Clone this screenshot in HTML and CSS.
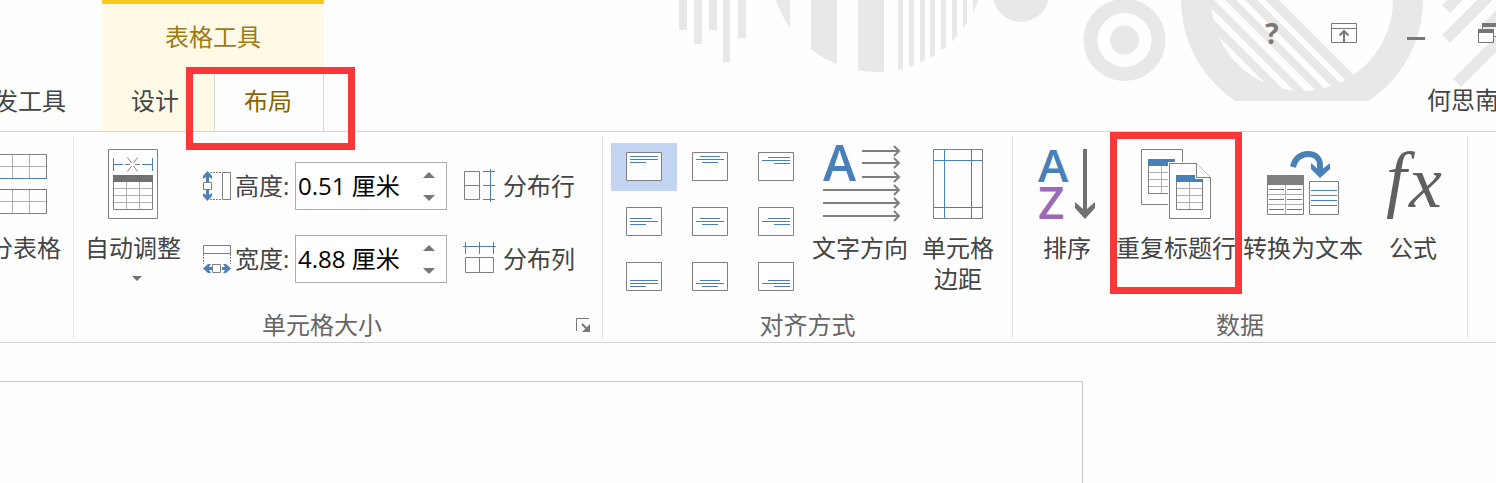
FILE: index.html
```html
<!DOCTYPE html>
<html lang="zh-CN">
<head>
  <meta charset="UTF-8">
  <title>表格工具 - 布局</title>
  <meta name="viewport" content="width=device-width, initial-scale=1.0">
  <link rel="stylesheet" href="styles.css">
</head>
<body>
  <header class="titlebar">
    <svg class="decoration" width="836" height="131" viewBox="0 0 836 131" aria-hidden="true">
      <defs>
        <clipPath id="disc"><circle cx="217" cy="-35" r="107"/></clipPath>
        <clipPath id="ring"><rect x="510" y="0" width="260" height="101"/></clipPath>
        <clipPath id="hole"><circle cx="642" cy="0" r="92"/></clipPath>
      </defs>
      <g fill="#e8e8e8">
        <path d="M19 0h8v30h-8zM34 0h8v44h-8zM49 0h8v30h-8zM63 0h7v62h-7zM78 0h8v38h-8z"/>
        <path clip-path="url(#disc)" d="M100 0h30v80h-30zM151 0h26v80h-26zM198 0h26v80h-26zM238 0h5v80h-5zM249 0h5v80h-5zM260 0h5v80h-5zM270 0h5v80h-5zM281 0h5v80h-5zM292 0h5v80h-5zM303 0h4v80h-4zM313 0h5v80h-5z"/>
        <circle cx="361" cy="-6" r="28"/>
      </g>
      <circle cx="464.500" cy="40" r="34" fill="none" stroke="#e8e8e8" stroke-width="14"/>
      <circle cx="464.500" cy="40" r="14.500" fill="#e8e8e8"/>
      <circle cx="642" cy="0" r="106" fill="none" stroke="#e8e8e8" stroke-width="30" clip-path="url(#ring)"/>
      <path clip-path="url(#hole)" fill="#e8e8e8" d="M522 0h12l100 100h-12zM543 0h11l100 100h-11zM565 0h11l100 100h-11zM585 0h12l100 100h-12zM605 0h14l100 100h-14z"/>
      <path stroke="#e8e8e8" stroke-width="11" d="M786 9l14-14M786 39l44-44M797 83l43-43M825 29l15-15"/>
    </svg>

    <nav class="main-tabs">
      <button class="tab">开发工具</button>
    </nav>
    <div class="context-group">
      <div class="context-title">表格工具</div>
      <nav class="context-tabs">
        <button class="tab">设计</button>
        <button class="tab active">布局</button>
        <span class="mark mark-tab"></span>
      </nav>
    </div>
    <div class="window-side">
      <div class="window-controls">
        <button class="help" aria-label="帮助">?</button>
        <button aria-label="功能区显示选项">
          <svg width="26" height="20" viewBox="0 0 26 20" fill="none" stroke="#777">
            <path d="M.5.5h25v19H.5zM0 5.500h26"/>
            <path stroke-width="2" d="M13 19V8M8.500 12.500L13 8l4.500 4.500"/>
          </svg>
        </button>
        <button aria-label="最小化">
          <svg width="26" height="20" viewBox="0 0 26 20"><path fill="#777" d="M4 14h18v3H4z"/></svg>
        </button>
        <button aria-label="还原">
          <svg width="20" height="20" viewBox="0 0 20 20" fill="none" stroke="#777">
            <path d="M4.500 6V.5h15v13H16"/>
            <path stroke-width="4" d="M4 2h16M0 8h16"/>
            <path d="M.5 8v11.500h15V8"/>
          </svg>
        </button>
      </div>
      <a class="user" href="#">何思南</a>
    </div>
  </header>

  <main class="ribbon">
    <section class="group group-merge">
      <div class="group-body">
        <button class="big">
          <svg width="68" height="80" viewBox="0 0 68 80" fill="none">
            <path stroke="#b0b0b0" d="M16.500 11v24M33.500 11v24M50.500 11v24M0 23.500h68M16.500 47v24M33.500 47v24M50.500 47v24M0 58.500h68"/>
            <path stroke="#7f7f7f" d="M.5 35V11.500h67V35M.5 46v24.500h67V46"/>
            <path stroke="#4a80b8" d="M0 35.500h68M0 46.500h68"/>
          </svg>
          拆分表格
        </button>
      </div>
    </section>

    <section class="group group-size">
      <div class="group-body">
        <button class="big w-102">
          <svg width="50" height="80" viewBox="0 0 50 80" fill="none">
            <path stroke="#7f7f7f" fill="#fff" d="M.5 6.500h49v69H.5z"/>
            <path stroke="#4a80b8" d="M5.500 15v13M5.500 21.500H15M34 21.500h10.500M44.500 15v13"/>
            <path stroke="#7f7f7f" d="M17 21.500h5M27 21.500h5M19.500 14.500l4 5.500M29.500 14.500l-4 5.500M19.500 28.500l4-5.500M29.500 28.500l-4-5.500"/>
            <path fill="#717171" d="M5 32h40v7H5z"/>
            <path stroke="#b0b0b0" d="M18.500 39v27M31.500 39v27M5 45.500h40M5 52.500h40M5 59.500h40"/>
            <path stroke="#7f7f7f" d="M5.500 39v27.500h39V39"/>
          </svg>
          自动调整
          <svg class="drop" width="18" height="5" viewBox="0 0 18 5"><path fill="#717171" d="M8 0h10l-5 5z"/></svg>
        </button>

        <div class="fields">
          <div class="field">
            <svg width="28" height="30" viewBox="0 0 28 30" fill="none">
              <path fill="#4a80b8" d="M4.500 0L9 5v3L6 6v5H3V6L0 8V5zM4.500 30L9 25v-3l-3 2v-5H3v5l-3-2v3z"/>
              <path fill="#fff" stroke="#7f7f7f" d="M.5 11.500h8v7h-8zM19.500 1.500h8v27h-8z"/>
              <path stroke="#7f7f7f" stroke-dasharray="2 1" d="M7 1.500h12M7 28.500h12"/>
            </svg>
            <label for="cell-height">高度:</label>
            <div class="spin">
              <input type="text" id="cell-height" value="0.51 厘米">
              <div class="arrows">
                <button aria-label="增加高度"><svg width="12" height="6" viewBox="0 0 12 6"><path fill="#777" d="M0 6h12L6 0z"/></svg></button>
                <button aria-label="减少高度"><svg width="12" height="6" viewBox="0 0 12 6"><path fill="#777" d="M0 0h12L6 6z"/></svg></button>
              </div>
            </div>
          </div>
          <div class="field">
            <svg width="28" height="30" viewBox="0 0 28 30" fill="none">
              <path stroke="#7f7f7f" d="M.5 1.500h27v8H.5zM9.500 20.500h8v8h-8z"/>
              <path stroke="#7f7f7f" stroke-dasharray="2 1" d="M.5 10v10M27.500 10v10"/>
              <path fill="#4a80b8" d="M0 24.500L5 20h3l-2 3h3v3H6l2 3H5zM28 24.500L23 20h-3l2 3h-3v3h3l-2 3h3z"/>
            </svg>
            <label for="cell-width">宽度:</label>
            <div class="spin">
              <input type="text" id="cell-width" value="4.88 厘米">
              <div class="arrows">
                <button aria-label="增加宽度"><svg width="12" height="6" viewBox="0 0 12 6"><path fill="#777" d="M0 6h12L6 0z"/></svg></button>
                <button aria-label="减少宽度"><svg width="12" height="6" viewBox="0 0 12 6"><path fill="#777" d="M0 0h12L6 6z"/></svg></button>
              </div>
            </div>
          </div>
        </div>

        <div class="spread">
          <button class="small">
            <svg width="34" height="34" viewBox="0 0 34 34" fill="none">
              <path stroke="#7f7f7f" d="M1.500 2.500h15v28h-15zM1 16.500h15"/>
              <path stroke="#4a80b8" d="M27.500 0v33M20 2.500h12M20 16.500h12M20 30.500h12"/>
            </svg>
            <span>分布行</span>
          </button>
          <button class="small">
            <svg width="34" height="34" viewBox="0 0 34 34" fill="none">
              <path stroke="#7f7f7f" d="M2.500 15.500h28v15h-28zM16.500 15v15"/>
              <path stroke="#4a80b8" d="M0 4.500h33M2.500 0v12M16.500 0v12M30.500 0v12"/>
            </svg>
            <span>分布列</span>
          </button>
        </div>
      </div>
      <div class="caption">
        <span>单元格大小</span>
        <button class="launcher" aria-label="单元格大小设置">
          <svg width="14" height="14" viewBox="0 0 14 14" fill="none" stroke="#777">
            <path d="M.5 13V.5H13"/>
            <path stroke-width="2" d="M6 6l5 5"/>
            <path fill="#777" stroke="none" d="M14 6v8H6z"/>
          </svg>
        </button>
      </div>
    </section>

    <section class="group group-align">
      <div class="group-body">
        <div class="align-grid">
          <button class="active" aria-label="靠上左对齐"><svg width="36" height="29" viewBox="0 0 36 29"><path class="cell" d="M.5.5h35v28H.5z"/><path class="lines" d="M4 4.500h28M4 7.500h28M4 10.500h16"/></svg></button>
          <button aria-label="靠上居中"><svg width="36" height="29" viewBox="0 0 36 29"><path class="cell" d="M.5.5h35v28H.5z"/><path class="lines" d="M8 4.500h20M4 7.500h28M10 10.500h16"/></svg></button>
          <button aria-label="靠上右对齐"><svg width="36" height="29" viewBox="0 0 36 29"><path class="cell" d="M.5.5h35v28H.5z"/><path class="lines" d="M10 5.500h22M4 8.500h28M16 11.500h16"/></svg></button>
          <button aria-label="中部左对齐"><svg width="36" height="29" viewBox="0 0 36 29"><path class="cell" d="M.5.5h35v28H.5z"/><path class="lines" d="M4 11.500h22M4 14.500h28M4 17.500h16"/></svg></button>
          <button aria-label="水平居中"><svg width="36" height="29" viewBox="0 0 36 29"><path class="cell" d="M.5.5h35v28H.5z"/><path class="lines" d="M8 11.500h20M4 14.500h28M10 17.500h16"/></svg></button>
          <button aria-label="中部右对齐"><svg width="36" height="29" viewBox="0 0 36 29"><path class="cell" d="M.5.5h35v28H.5z"/><path class="lines" d="M10 11.500h22M4 14.500h28M16 17.500h16"/></svg></button>
          <button aria-label="靠下左对齐"><svg width="36" height="29" viewBox="0 0 36 29"><path class="cell" d="M.5.5h35v28H.5z"/><path class="lines" d="M4 18.500h28M4 21.500h28M4 24.500h16"/></svg></button>
          <button aria-label="靠下居中"><svg width="36" height="29" viewBox="0 0 36 29"><path class="cell" d="M.5.5h35v28H.5z"/><path class="lines" d="M8 18.500h20M4 21.500h28M10 24.500h16"/></svg></button>
          <button aria-label="靠下右对齐"><svg width="36" height="29" viewBox="0 0 36 29"><path class="cell" d="M.5.5h35v28H.5z"/><path class="lines" d="M10 18.500h22M4 21.500h28M16 24.500h16"/></svg></button>
        </div>
        <button class="big w-102">
          <svg width="82" height="80" viewBox="-4 0 82 80" fill="none">
            <text class="letter" x="0" y="38" font-size="50" fill="#4a80b8">A</text>
            <path stroke="#7f7f7f" stroke-width="2" d="M39 8h37M39 20h37M39 34h37M0 47h76M0 60h76M0 73h76"/>
            <path stroke="#7f7f7f" stroke-width="2" d="M71 3l5 5-5 5M71 15l5 5-5 5M71 29l5 5-5 5M71 42l5 5-5 5M71 55l5 5-5 5M71 68l5 5-5 5"/>
          </svg>
          文字方向
        </button>
        <button class="big w-94">
          <svg width="50" height="80" viewBox="0 0 50 80" fill="none">
            <path stroke="#4a80b8" d="M11.500 6v70M38.500 6v70M0 17.500h50M0 64.500h50"/>
            <path stroke="#7f7f7f" d="M.5 6.500h49v69H.5z"/>
          </svg>
          单元格<br>边距
        </button>
      </div>
      <div class="caption"><span>对齐方式</span></div>
    </section>

    <section class="group group-data">
      <div class="group-body">
        <button class="big w-92">
          <svg width="58" height="80" viewBox="0 0 58 80">
            <text class="letter" x="0" y="39" font-size="46" fill="#4a80b8">A</text>
            <text class="letter" x="0" y="76" font-size="46" fill="#9a6ab8">Z</text>
            <path fill="#717171" d="M45 6h4v60l8-7v6L47 76 37 65v-6l8 7z"/>
          </svg>
          排序
        </button>
        <button class="big w-126">
          <svg width="70" height="80" viewBox="0 0 70 80" fill="none">
            <path fill="#fff" stroke="#7f7f7f" d="M.5 6.500h41v55H.5z"/>
            <path stroke="#b0b0b0" d="M20.500 23v27M8 29.500h26M8 36.500h26M8 43.500h26"/>
            <path stroke="#7f7f7f" d="M7.500 23v27.500H34"/>
            <path fill="#4a80b8" d="M7 16h27v7H7z"/>
            <path fill="#fff" d="M27 19h30l13 13v44H27z"/>
            <path fill="#fff" stroke="#7f7f7f" d="M28.500 20.500h27l14 14v41h-41z"/>
            <path stroke="#b0b0b0" d="M48.500 39v27M35 45.500h26M35 52.500h26M35 59.500h26"/>
            <path stroke="#7f7f7f" d="M35.500 39v27.500h26V39"/>
            <path fill="#4a80b8" d="M35 32h19v4h8v3H35z"/>
            <path fill="#fff" stroke="#7f7f7f" d="M55.500 20.500v14h14"/>
          </svg>
          重复标题行
          <span class="mark mark-repeat"></span>
        </button>
        <button class="big w-128">
          <svg width="72" height="80" viewBox="0 0 72 80" fill="none">
            <path stroke="#b0b0b0" d="M18.500 42v30M0 51.500h37M0 61.500h37"/>
            <path stroke="#7f7f7f" d="M.5 42v29.500h36V42M42.500 38.500h29v33h-29z"/>
            <path fill="#7f7f7f" d="M0 32h37v10H0z"/>
            <path stroke="#4a80b8" d="M2 46.500h15M20 46.500h15M2 56.500h15M20 56.500h15M2 66.500h15M20 66.500h15M44 47.500h26M44 52.500h26M44 57.500h26M44 62.500h26"/>
            <path stroke="#4a80b8" stroke-width="6" d="M26 24C28 15 34 11 41 11c8 0 12 5 12 11v6"/>
            <path fill="#4a80b8" d="M44 20l9 8 10-8v6L53 35l-9-9z"/>
          </svg>
          转换为文本
        </button>
        <button class="big w-92">
          <svg width="60" height="80" viewBox="0 0 60 80"><text class="formula" x="3" y="60" font-size="74">f<tspan x="26" y="64">x</tspan></text></svg>
          公式
        </button>
      </div>
      <div class="caption"><span>数据</span></div>
    </section>
  </main>

  <div class="workspace">
    <div class="page"></div>
  </div>
</body>
</html>
```

FILE: styles.css
```css
* {
  box-sizing: border-box;
}
body {
  margin: 0;
  min-height: 100vh;
  display: flex;
  flex-direction: column;
  overflow: hidden;
  background: #fdfdfd;
  color: #444;
  font-family: "Open Sans", "Noto Sans CJK SC", sans-serif;
  font-size: 24px;
  line-height: 31px;
}
button {
  margin: 0;
  padding: 0;
  border: none;
  background: none;
  color: inherit;
  font: inherit;
  white-space: nowrap;
  cursor: pointer;
}
svg {
  display: block;
  flex-shrink: 0;
}

/* title bar */
.titlebar {
  position: relative;
  display: flex;
  border-bottom: 1px solid #d4d4d4;
  background: #fefefe;
}
.decoration {
  position: absolute;
  top: 0;
  right: 0;
}
.main-tabs {
  width: 102px;
  padding-right: 36px;
  display: flex;
  justify-content: flex-end;
  align-items: flex-end;
}
.tab {
  height: 58px;
  padding-bottom: 3px;
  flex-shrink: 0;
}
.context-group {
  width: 222px;
  border-top: 4px solid #f5cc1b;
  background: #fffae6;
}
.context-title {
  padding: 17px 0 21px;
  color: #9c7a16;
  text-align: center;
}
.context-tabs {
  position: relative;
  display: flex;
}
.context-tabs .tab {
  width: 112px;
  padding-right: 4px;
}
.context-tabs .tab.active {
  width: 110px;
  margin-bottom: -1px;
  padding-right: 2px;
  border: 1px solid #d4d4d4;
  border-width: 0 1px;
  background: #fefefe;
  color: #866400;
}
.context-tabs .tab:first-child {
  padding-right: 6px;
}
.window-side {
  position: relative;
  width: 260px;
  margin-left: auto;
}
.window-controls {
  display: flex;
}
.window-controls button {
  width: 72px;
  height: 66px;
  flex-shrink: 0;
  display: flex;
  align-items: center;
  justify-content: center;
}
.window-controls .help {
  color: #777;
  font-size: 28px;
  font-weight: bold;
}
.user {
  display: block;
  padding: 18px 0 0 191px;
  color: #444;
  text-decoration: none;
  white-space: nowrap;
}

/* red marks */
.mark {
  position: absolute;
  z-index: 1;
  border: 7px solid #fc3737;
  pointer-events: none;
}
.mark-tab {
  top: -6px;
  right: -31px;
  width: 169px;
  height: 83px;
}
.mark-repeat {
  top: -11px;
  left: -3px;
  right: -3px;
  height: 162px;
}

/* ribbon */
.ribbon {
  display: flex;
  padding: 4px 0;
  border-bottom: 1px solid #d4d4d4;
  background: #fefefe;
}
.group {
  flex-shrink: 0;
  border-right: 1px solid #e1e1e1;
}
.group-body {
  min-height: 177px;
  padding: 7px 8px 0;
  display: flex;
  align-items: flex-start;
}
.group-merge {
  width: 74px;
}
.group-merge .group-body {
  padding-right: 12px;
  justify-content: flex-end;
}
.group-size {
  width: 529px;
}
.group-align {
  width: 410px;
}
.group-data {
  width: 455px;
}
.caption {
  display: flex;
  padding-bottom: 1px;
  line-height: 24px;
  color: #666;
  text-align: center;
}
.caption span {
  flex: 1;
}
.launcher {
  width: 32px;
  padding: 0 0 0 6px;
}
.big {
  position: relative;
  flex-shrink: 0;
  display: flex;
  flex-direction: column;
  align-items: center;
  text-align: center;
}
.big > svg:first-child {
  margin-bottom: 9px;
}
.big .drop {
  margin-top: 13px;
}
.w-92 {
  width: 92px;
}
.w-94 {
  width: 94px;
}
.w-102 {
  width: 102px;
}
.w-126 {
  width: 126px;
}
.w-128 {
  width: 128px;
}

.fields,
.spread {
  display: flex;
  flex-direction: column;
  gap: 25px;
  padding-top: 19px;
}
.fields {
  margin-left: 19px;
}
.spread {
  margin-left: 16px;
}
.field {
  display: flex;
  align-items: center;
}
.field label {
  width: 60px;
  margin-left: 4px;
  padding-bottom: 2px;
  white-space: nowrap;
}
.spin {
  display: flex;
  width: 152px;
  height: 48px;
  border: 1px solid #ababab;
  background: #fff;
}
.spin input {
  flex: 1;
  min-width: 0;
  padding: 0 0 2px 2px;
  border: none;
  outline: none;
  background: none;
  color: #000;
  font: inherit;
}
.arrows {
  width: 34px;
  display: flex;
  flex-direction: column;
}
.arrows button {
  flex: 1;
  display: flex;
  align-items: center;
  justify-content: center;
}
.small {
  display: flex;
  align-items: center;
  gap: 6px;
  height: 48px;
}
.small span {
  padding-bottom: 2px;
}

.align-grid {
  display: grid;
  grid-template-columns: repeat(3, 66px);
  row-gap: 7px;
}
.align-grid button {
  height: 48px;
  padding-bottom: 1px;
  display: flex;
  align-items: center;
  justify-content: center;
}
.align-grid .active {
  background: #c2d5f2;
}
.cell {
  fill: #fff;
  stroke: #7f7f7f;
}
.active .cell {
  fill: #fefefe;
}
.lines {
  stroke: #4a80b8;
}
.letter {
  font-family: "Open Sans", sans-serif;
  font-weight: 600;
}
.formula {
  font-family: "Liberation Serif", serif;
  font-style: italic;
  fill: #606060;
}

/* document */
.workspace {
  flex: 1;
  display: flex;
  padding-top: 38px;
}
.page {
  flex: 1;
  margin-right: 413px;
  border: 1px solid #c6c6c6;
  border-width: 1px 1px 0 0;
  background: #fefefe;
}
```
